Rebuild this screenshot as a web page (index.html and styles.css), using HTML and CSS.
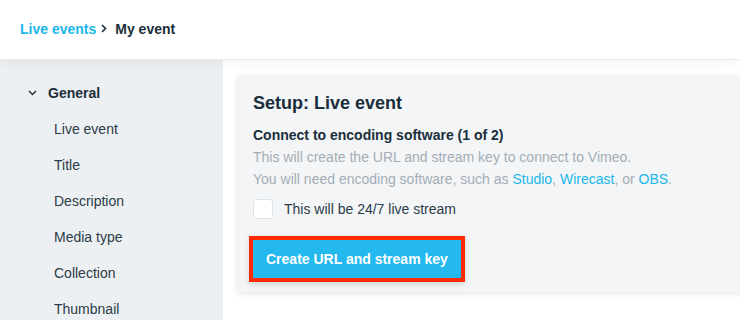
FILE: index.html
```html
<!DOCTYPE html>
<html lang="en">
<head>
    <meta charset="UTF-8">
    <link rel="stylesheet" href="styles.css">
</head>
<body>
    <header class="top-bar">
        <nav class="breadcrumb">
            <a class="crumb-link" href="#">Live events</a>
            <svg class="crumb-sep" width="6" height="9" viewBox="0 0 6 9"><polyline points="1,1 4.5,4.5 1,8" fill="none" stroke="#1a2e3b" stroke-width="1.6"/></svg>
            <span class="crumb-current">My event</span>
        </nav>
    </header>
    <div class="layout">
        <aside class="sidebar">
            <div class="nav-group">
                <svg class="group-chevron" width="9" height="6" viewBox="0 0 9 6"><polyline points="1,1 4.5,4.5 8,1" fill="none" stroke="#1a2e3b" stroke-width="1.4"/></svg>
                <span>General</span>
            </div>
            <ul class="nav-list">
                <li>Live event</li>
                <li>Title</li>
                <li>Description</li>
                <li>Media type</li>
                <li>Collection</li>
                <li>Thumbnail</li>
            </ul>
        </aside>
        <main class="content">
            <section class="setup-card">
                <h1 class="setup-title">Setup: Live event</h1>
                <h2 class="setup-step">Connect to encoding software (1 of 2)</h2>
                <p class="setup-help">This will create the URL and stream key to connect to Vimeo.</p>
                <p class="setup-help">You will need encoding software, such as <a href="#">Studio</a>, <a href="#">Wirecast</a>, or <a href="#">OBS</a>.</p>
                <label class="check-row">
                    <span class="check-box"></span>
                    This will be 24/7 live stream
                </label>
                <button class="primary-btn">Create URL and stream key</button>
            </section>
        </main>
    </div>
</body>
</html>
```

FILE: styles.css
```css
html, body {
    margin: 0;
    padding: 0;
    height: 100%;
    background: #ffffff;
    color: #1a2e3b;
    font-family: "Liberation Sans", Arial, sans-serif;
    font-size: 14px;
    overflow: hidden;
}

.top-bar {
    position: relative;
    z-index: 2;
    height: 59px;
    display: flex;
    align-items: center;
    padding: 0 20px;
    background: #ffffff;
    box-shadow: 0 1px 0 #e6e8ea, 0 2px 14px rgba(0, 0, 0, 0.06);
}

.breadcrumb {
    display: flex;
    align-items: center;
    gap: 5px;
    font-weight: bold;
    font-size: 14px;
    margin-top: -2px;
}

.crumb-link {
    color: #1ab7ea;
    text-decoration: none;
}

.crumb-sep {
    margin-right: 3px;
}

.crumb-current {
    color: #1a2e3b;
}

.layout {
    display: flex;
    height: calc(100% - 59px);
}

.sidebar {
    width: 223px;
    flex-shrink: 0;
    background: #edf0f2;
    padding-top: 25px;
    box-sizing: border-box;
}

.nav-group {
    display: flex;
    align-items: center;
    gap: 11px;
    padding-left: 28px;
    height: 18px;
    font-weight: bold;
    color: #1a2e3b;
}

.nav-list {
    list-style: none;
    margin: 0;
    padding: 0 0 0 54px;
}

.nav-list li {
    height: 18px;
    line-height: 18px;
    margin-top: 18px;
    color: #2b3b48;
}

.content {
    flex: 1;
    padding: 17px 0 0 15px;
    min-width: 0;
}

.setup-card {
    background: #f4f5f7;
    padding: 16px 15px 14px 15px;
    border-radius: 3px 0 0 3px;
    box-shadow: 0 1px 6px rgba(0, 0, 0, 0.13);
}

.setup-title {
    margin: 0;
    font-size: 18px;
    line-height: 22px;
    font-weight: bold;
    color: #1a2e3b;
}

.setup-step {
    margin: 10px 0 0 0;
    font-size: 14px;
    line-height: 22px;
    font-weight: bold;
    color: #1a2e3b;
}

.setup-help {
    margin: 0;
    line-height: 22px;
    color: #a3adb6;
}

.setup-help a {
    color: #1ab7ea;
    text-decoration: none;
}

.check-row {
    display: flex;
    align-items: center;
    gap: 11px;
    margin-top: 9px;
    color: #2b3b48;
}

.check-box {
    width: 18px;
    height: 18px;
    background: #ffffff;
    border: 1px solid #dde2e6;
    border-radius: 3px;
}

.primary-btn {
    display: block;
    margin-top: 21px;
    height: 38px;
    padding: 0 13px;
    background: #23b9ef;
    color: #ffffff;
    border: none;
    border-radius: 0;
    font-family: inherit;
    font-size: 14px;
    font-weight: bold;
    box-shadow: 0 0 0 4px #ff2a00, 0 2px 6px 4px rgba(0, 0, 0, 0.15);
}
```
